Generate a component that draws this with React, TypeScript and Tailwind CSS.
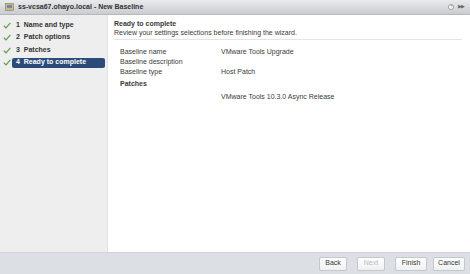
import React from 'react';

const steps = ['1  Name and type', '2  Patch options', '3  Patches', '4  Ready to complete'];

const rows = [
  { label: 'Baseline name', value: 'VMware Tools Upgrade' },
  { label: 'Baseline description', value: '' },
  { label: 'Baseline type', value: 'Host Patch' },
];

function Check() {
  return (
    <svg width="8" height="7" viewBox="0 0 8 7" className="shrink-0">
      <path d="M0.8 3.6 L3 5.8 L7.4 0.9" fill="none" stroke="#5a9e44" strokeWidth="1.2" />
    </svg>
  );
}

function Btn({ label, disabled }: { label: string; disabled?: boolean }) {
  return (
    <div
      className={`h-[14px] flex items-center justify-center rounded-[2px] border border-[#c4c7cc] bg-gradient-to-b from-white to-[#eef0f2] text-[7px] ${disabled ? 'text-[#b8bcc2]' : 'text-[#333]'}`}
      style={{ width: label === 'Finish' || label === 'Cancel' ? 32 : 28 }}
    >
      {label}
    </div>
  );
}

export default function App() {
  return (
    <div className="w-[470px] h-[274px] flex flex-col bg-white overflow-hidden" style={{ fontFamily: '"Liberation Sans", Arial, sans-serif' }}>
      {/* title bar */}
      <div className="h-[15px] shrink-0 flex items-center bg-gradient-to-b from-[#e9eaec] to-[#c9ccd0] border-b border-[#b5b8bc] pl-[5px] pr-[6px]">
        <svg width="9" height="8" viewBox="0 0 9 8" className="mr-[4px]">
          <rect x="0.5" y="0.5" width="8" height="7" fill="#c9b98a" stroke="#8a7d58" strokeWidth="0.6" />
          <rect x="2" y="2" width="5" height="3" fill="#6e8aa8" />
        </svg>
        <span className="text-[7px] font-bold text-[#333]">ss-vcsa67.ohayo.local - New Baseline</span>
        <div className="ml-auto flex items-center gap-[4px]">
          <div className="w-[6px] h-[6px] rounded-full border border-[#9a9da2] bg-white text-[4px] leading-[4px] text-[#777] flex items-center justify-center">?</div>
          <span className="text-[5px] text-[#666] tracking-[-1px]">▶▶</span>
        </div>
      </div>

      <div className="flex flex-1 min-h-0">
        {/* sidebar */}
        <div className="w-[108px] shrink-0 bg-[#eeeeee] border-r border-[#e2e2e2] pt-[5px] pl-[3px] pr-[2px] flex flex-col gap-[2.5px]">
          {steps.map((s, i) => {
            const active = i === steps.length - 1;
            return (
              <div key={s} className="flex items-center h-[10px] gap-[1px]">
                <Check />
                <div className={`flex-1 h-[10px] flex items-center pl-[4px] rounded-[2px] text-[7px] font-bold whitespace-pre ${active ? 'bg-[#2c4b78] text-white' : 'text-[#333]'}`}>
                  {s}
                </div>
              </div>
            );
          })}
        </div>

        {/* content */}
        <div className="flex-1 pl-[6px] pr-[8px] pt-[4px] text-[#3a3a3a]">
          <div className="text-[7px] font-bold leading-[9px]">Ready to complete</div>
          <div className="text-[7px] leading-[9px]">Review your settings selections before finishing the wizard.</div>
          <div className="mt-[2px] border-t border-[#e4e4e4]" />
          <div className="pl-[6px] pt-[7px] text-[7px]">
            {rows.map((r) => (
              <div key={r.label} className="flex h-[10px] items-center">
                <div className="w-[101px]">{r.label}</div>
                <div>{r.value}</div>
              </div>
            ))}
            <div className="font-bold mt-[2px] h-[10px] flex items-center">Patches</div>
            <div className="flex h-[10px] items-center mt-[3px]">
              <div className="w-[101px]" />
              <div>VMware Tools 10.3.0 Async Release</div>
            </div>
          </div>
        </div>
      </div>

      {/* footer */}
      <div className="h-[22px] shrink-0 bg-[#dcdfe3] border-t border-[#d0d3d7] flex items-center justify-end gap-[10px] pr-[5px]">
        <Btn label="Back" />
        <Btn label="Next" disabled />
        <div className="flex gap-[6px]">
          <Btn label="Finish" />
          <Btn label="Cancel" />
        </div>
      </div>
    </div>
  );
}
